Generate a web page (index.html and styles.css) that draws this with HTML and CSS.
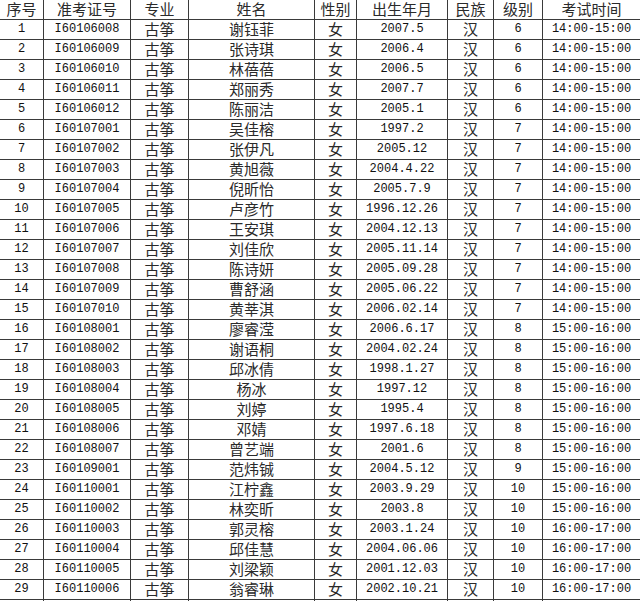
FILE: index.html
```html
<!DOCTYPE html>
<html lang="zh">
<head>
<meta charset="utf-8">
<title>考试名单</title>
<link rel="stylesheet" href="styles.css">
</head>
<body>
<div class="sheet">
  <div class="row head">
    <div class="c">序号</div><div class="c">准考证号</div><div class="c">专业</div><div class="c">姓名</div><div class="c">性别</div><div class="c">出生年月</div><div class="c">民族</div><div class="c">级别</div><div class="c">考试时间</div>
  </div>
</div>
<script src="app.js"></script>
</body>
</html>
```

FILE: app.js
```js
const rows = [
["1","I60106008","谢钰菲","2007.5","6","14:00-15:00"],
["2","I60106009","张诗琪","2006.4","6","14:00-15:00"],
["3","I60106010","林蓓蓓","2006.5","6","14:00-15:00"],
["4","I60106011","郑丽秀","2007.7","6","14:00-15:00"],
["5","I60106012","陈丽洁","2005.1","6","14:00-15:00"],
["6","I60107001","吴佳榕","1997.2","7","14:00-15:00"],
["7","I60107002","张伊凡","2005.12","7","14:00-15:00"],
["8","I60107003","黄旭薇","2004.4.22","7","14:00-15:00"],
["9","I60107004","倪昕怡","2005.7.9","7","14:00-15:00"],
["10","I60107005","卢彦竹","1996.12.26","7","14:00-15:00"],
["11","I60107006","王安琪","2004.12.13","7","14:00-15:00"],
["12","I60107007","刘佳欣","2005.11.14","7","14:00-15:00"],
["13","I60107008","陈诗妍","2005.09.28","7","14:00-15:00"],
["14","I60107009","曹舒涵","2005.06.22","7","14:00-15:00"],
["15","I60107010","黄莘淇","2006.02.14","7","14:00-15:00"],
["16","I60108001","廖睿滢","2006.6.17","8","15:00-16:00"],
["17","I60108002","谢语桐","2004.02.24","8","15:00-16:00"],
["18","I60108003","邱冰倩","1998.1.27","8","15:00-16:00"],
["19","I60108004","杨冰","1997.12","8","15:00-16:00"],
["20","I60108005","刘婷","1995.4","8","15:00-16:00"],
["21","I60108006","邓婧","1997.6.18","8","15:00-16:00"],
["22","I60108007","曾艺端","2001.6","8","15:00-16:00"],
["23","I60109001","范炜铖","2004.5.12","9","15:00-16:00"],
["24","I60110001","江柠鑫","2003.9.29","10","15:00-16:00"],
["25","I60110002","林奕昕","2003.8","10","15:00-16:00"],
["26","I60110003","郭灵榕","2003.1.24","10","16:00-17:00"],
["27","I60110004","邱佳慧","2004.06.06","10","16:00-17:00"],
["28","I60110005","刘梁颖","2001.12.03","10","16:00-17:00"],
["29","I60110006","翁睿琳","2002.10.21","10","16:00-17:00"],
["30","I60110007","林楚婧","2002.8.15","10","16:00-17:00"]
];
const sheet = document.querySelector('.sheet');
for (const r of rows) {
  const row = document.createElement('div');
  row.className = 'row';
  const cells = [
    [r[0], 'num'], [r[1], 'num'], ['古筝', 'cn'], [r[2], 'cn'], ['女', 'cn'],
    [r[3], 'num'], ['汉', 'cn'], [r[4], 'num'], [r[5], 'num']
  ];
  for (const [t, k] of cells) {
    const c = document.createElement('div');
    c.className = 'c ' + k;
    c.textContent = t;
    row.appendChild(c);
  }
  sheet.appendChild(row);
}
```

FILE: styles.css
```css
html, body {
  margin: 0;
  padding: 0;
  background: #fff;
}
body {
  width: 640px;
  height: 601px;
  overflow: hidden;
}
.sheet {
  width: 640px;
}
.row {
  display: grid;
  grid-template-columns: 44px 87px 58px 126px 42px 91px 46px 49px 97px;
  height: 20px;
}
.c {
  box-sizing: border-box;
  height: 20px;
  border-right: 1px solid #3a3a3a;
  border-bottom: 1px solid #3a3a3a;
  text-align: center;
  line-height: 19px;
  color: #1e1e1e;
  white-space: nowrap;
}
.c:last-child {
  border-right: none;
}
.head .c, .cn {
  font-family: "Noto Sans CJK SC", sans-serif;
  font-size: 15px;
  font-weight: 400;
  line-height: 17px;
  padding-bottom: 2px;
  color: #2a2a2a;
}
.num {
  font-family: "Liberation Mono", monospace;
  font-size: 12px;
  color: #111;
}
```
